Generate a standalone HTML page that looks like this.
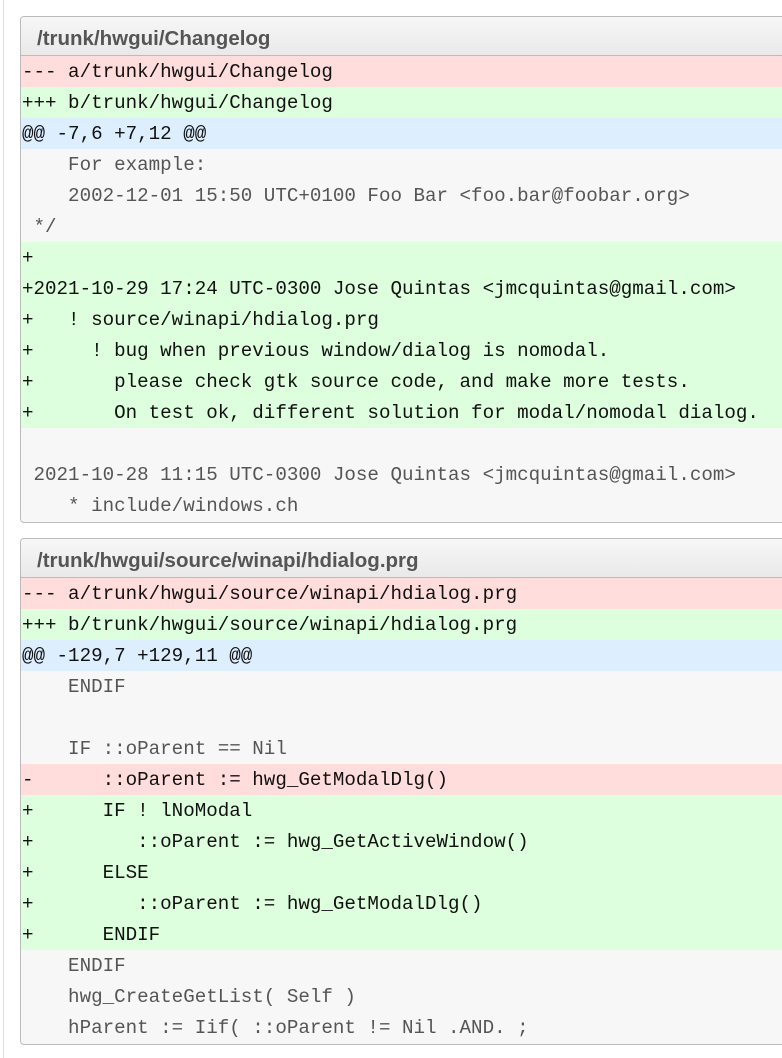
<!DOCTYPE html>
<html><head><meta charset="utf-8"><style>
html,body{margin:0;padding:0;background:#fff;}
body{width:782px;height:1058px;overflow:hidden;position:relative;}
.vl{position:absolute;left:3px;top:0;width:1px;height:1058px;background:#ddd;}
.box{position:absolute;left:20px;width:800px;border:1px solid #bbb;border-radius:4px;overflow:hidden;background:#f7f7f7;}
.hd{height:38px;line-height:43px;padding-left:16px;font-family:"Liberation Sans",sans-serif;font-weight:bold;font-size:20.5px;color:#555;background:linear-gradient(#f7f7f7,#e9e9e9);border-bottom:1px solid #bbb;}
.r{height:30px;padding-top:1px;line-height:31px;font-family:"Liberation Mono",monospace;font-size:19.2px;white-space:pre;padding-left:1px;color:#555;background:#f7f7f7;}
.d{background:#ffdddd;color:#111;}
.a{background:#ddffdd;color:#111;}
.h{background:#ddeeff;color:#111;}
</style></head><body>
<div class="vl"></div>
<div class="box" style="top:16px;height:505px;">
<div class="hd">/trunk/hwgui/Changelog</div>
<div class="r d">--- a/trunk/hwgui/Changelog</div>
<div class="r a">+++ b/trunk/hwgui/Changelog</div>
<div class="r h">@@ -7,6 +7,12 @@</div>
<div class="r">    For example:</div>
<div class="r">    2002-12-01 15:50 UTC+0100 Foo Bar &lt;foo.bar@foobar.org&gt;</div>
<div class="r"> */</div>
<div class="r a">+</div>
<div class="r a">+2021-10-29 17:24 UTC-0300 Jose Quintas &lt;jmcquintas@gmail.com&gt;</div>
<div class="r a">+   ! source/winapi/hdialog.prg</div>
<div class="r a">+     ! bug when previous window/dialog is nomodal.</div>
<div class="r a">+       please check gtk source code, and make more tests.</div>
<div class="r a">+       On test ok, different solution for modal/nomodal dialog.</div>
<div class="r"> </div>
<div class="r"> 2021-10-28 11:15 UTC-0300 Jose Quintas &lt;jmcquintas@gmail.com&gt;</div>
<div class="r">    * include/windows.ch</div>
</div>
<div class="box" style="top:538px;height:505px;">
<div class="hd">/trunk/hwgui/source/winapi/hdialog.prg</div>
<div class="r d">--- a/trunk/hwgui/source/winapi/hdialog.prg</div>
<div class="r a">+++ b/trunk/hwgui/source/winapi/hdialog.prg</div>
<div class="r h">@@ -129,7 +129,11 @@</div>
<div class="r">    ENDIF</div>
<div class="r"> </div>
<div class="r">    IF ::oParent == Nil</div>
<div class="r d">-      ::oParent := hwg_GetModalDlg()</div>
<div class="r a">+      IF ! lNoModal</div>
<div class="r a">+         ::oParent := hwg_GetActiveWindow()</div>
<div class="r a">+      ELSE</div>
<div class="r a">+         ::oParent := hwg_GetModalDlg()</div>
<div class="r a">+      ENDIF</div>
<div class="r">    ENDIF</div>
<div class="r">    hwg_CreateGetList( Self )</div>
<div class="r">    hParent := Iif( ::oParent != Nil .AND. ;</div>
</div>
</body></html>
